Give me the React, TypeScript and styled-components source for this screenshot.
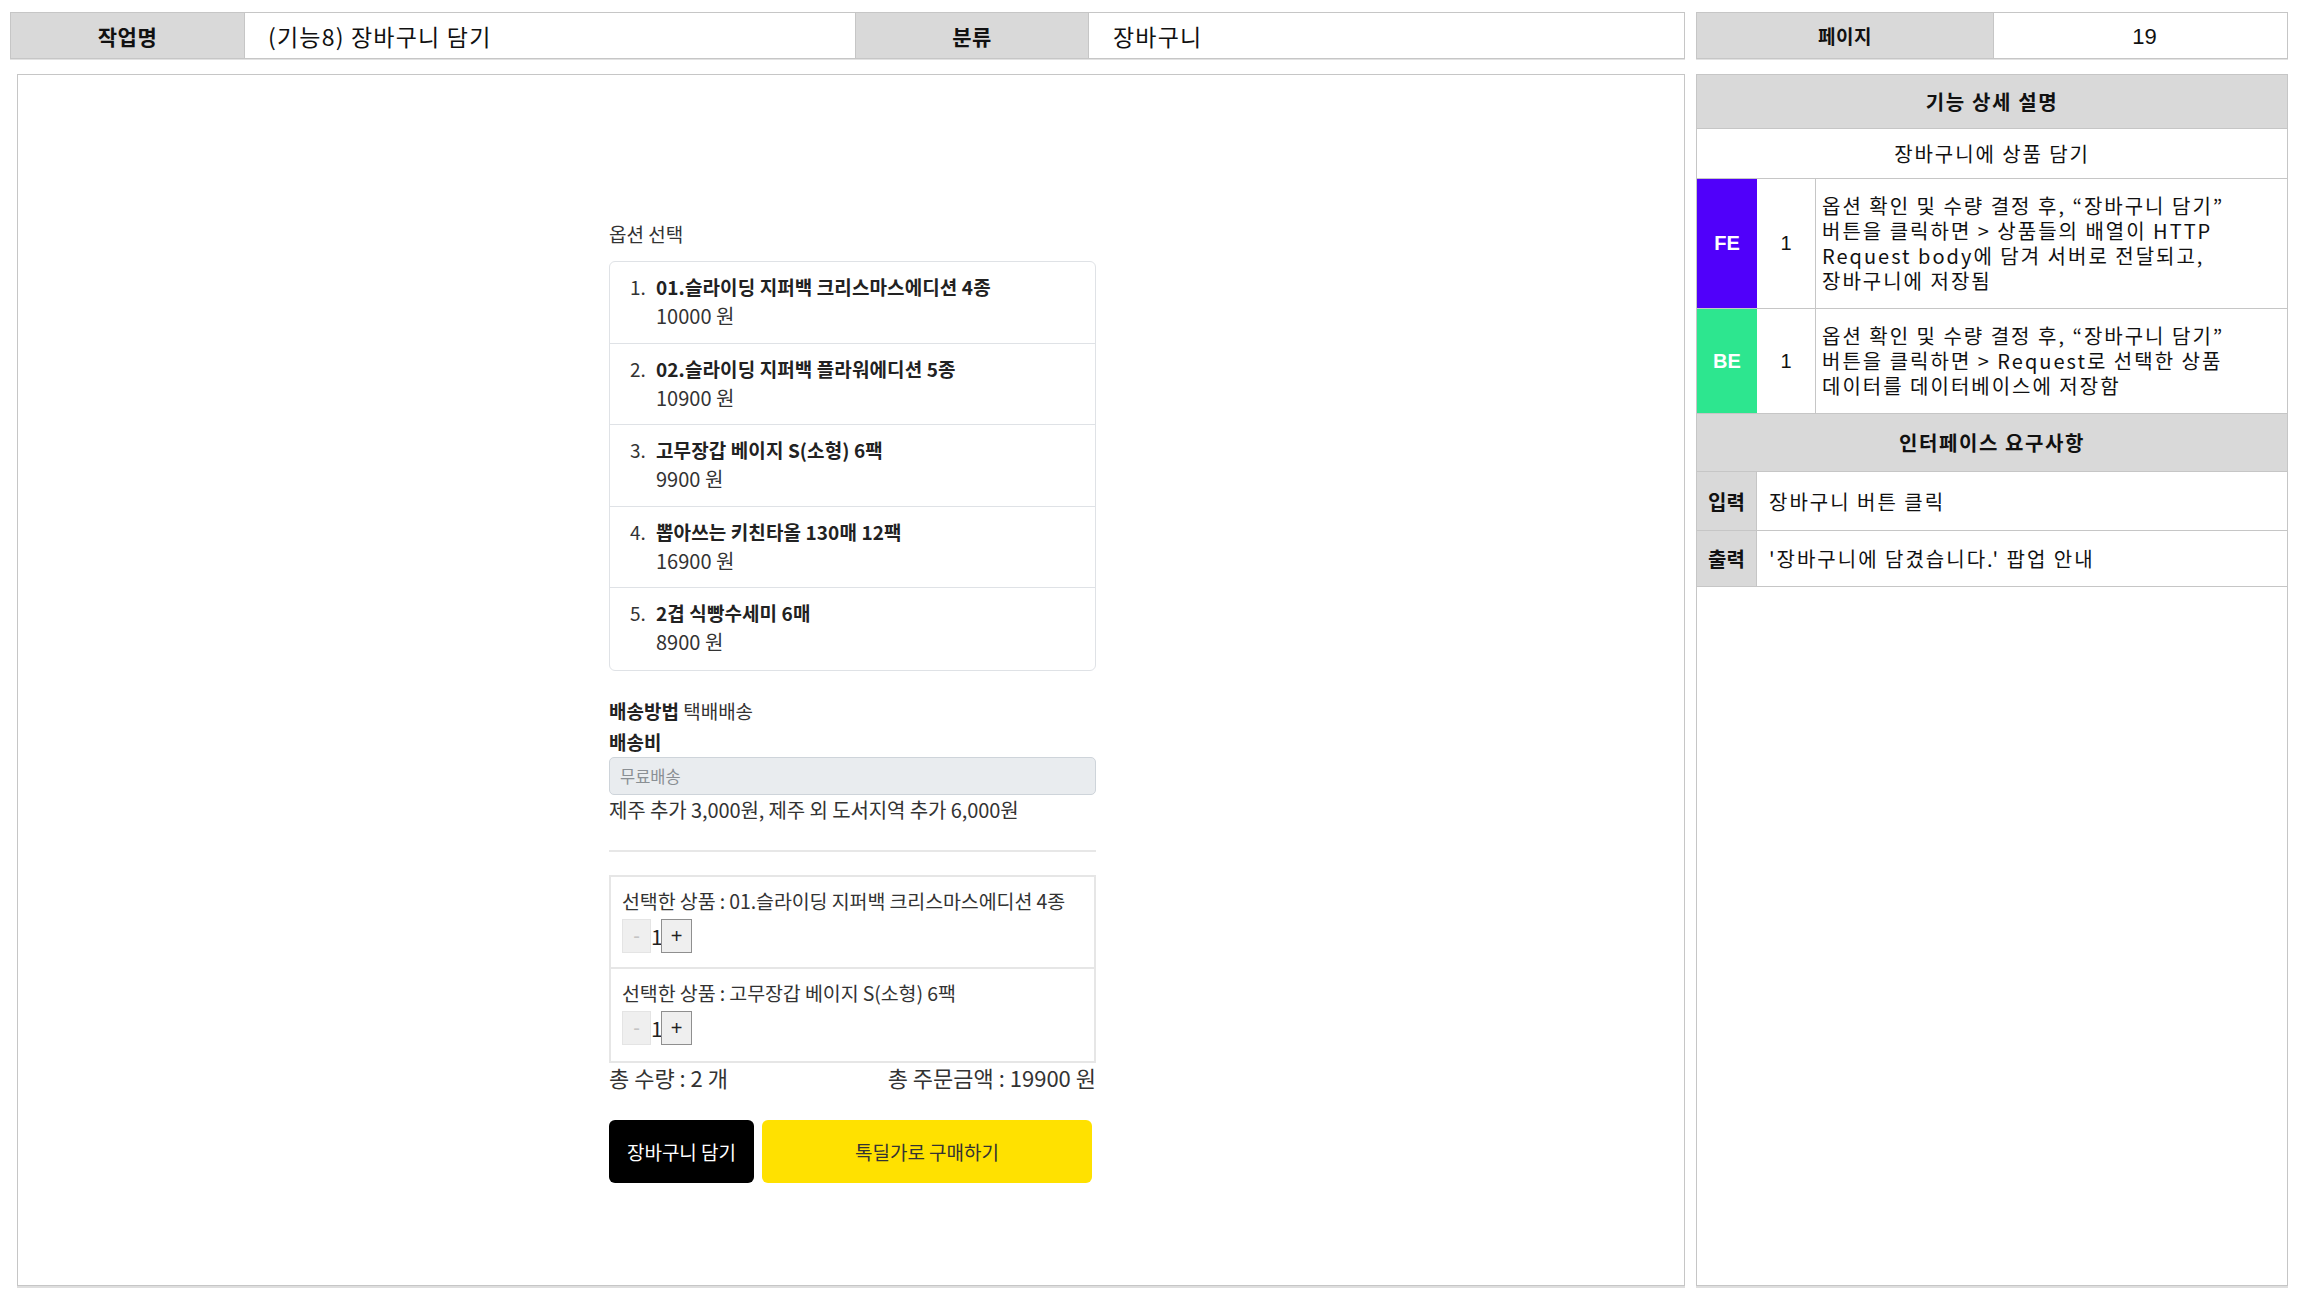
import React from 'react'
import styled, { createGlobalStyle } from 'styled-components'

const LINE = '#c6c6c6'
const HEAD_BG = '#d9d9d9'
const KR = `"Noto Sans CJK KR", "Noto Sans", sans-serif`

const GlobalStyle = createGlobalStyle`
  html, body {
    margin: 0;
    padding: 0;
    background: #ffffff;
    font-family: ${KR};
    color: #111;
  }
  * { box-sizing: border-box; }
`

const Page = styled.div`
  width: 2310px;
  height: 1300px;
  padding: 12px 0 0 10px;
  display: grid;
  grid-template-columns: 1675px 592px;
  grid-template-rows: 47px 1212px;
  column-gap: 11px;
  row-gap: 15px;
`

const HeaderBar = styled.div<{ $cols: string }>`
  display: grid;
  grid-template-columns: ${(p) => p.$cols};
  border: 1px solid ${LINE};
  box-shadow: 0 1px 0 #e2e2e2;
`

const HeadCell = styled.div<{ $align?: string; $pad?: number; $gray?: boolean; $size?: number }>`
  display: flex;
  align-items: center;
  justify-content: ${(p) => p.$align || 'center'};
  padding-left: ${(p) => p.$pad || 0}px;
  background: ${(p) => (p.$gray ? HEAD_BG : '#fff')};
  border-right: 1px solid ${LINE};
  font-size: ${(p) => p.$size || 21}px;
  font-weight: ${(p) => (p.$gray ? 700 : 400)};
  letter-spacing: ${(p) => (p.$gray ? 0.5 : 1.2)}px;
  &:last-child { border-right: none; }
`

const PageNum = styled(HeadCell)`
  font-family: "Liberation Sans", Arial, sans-serif;
  font-size: 22px;
  letter-spacing: 0;
  padding-top: 2px;
  padding-left: 8px;
`

const Canvas = styled.div`
  margin-left: 7px;
  border: 1px solid ${LINE};
  box-shadow: 0 2px 0 #dedede;
  padding: 146px 0 0 591px;
`

const Mobile = styled.div`
  width: 487px;
  display: flex;
  flex-direction: column;
  color: #222;
`

const Label = styled.div`
  font-size: 19px;
  line-height: 26px;
  color: #333;
  margin-bottom: 14px;
`

const OptionList = styled.div`
  border: 1px solid #dfe2e6;
  border-radius: 6px;
  display: flex;
  flex-direction: column;
`

const OptionRow = styled.div`
  display: flex;
  height: 81.6px;
  padding: 10px 0 0 20px;
  border-bottom: 1px solid #dfe2e6;
  &:last-child { border-bottom: none; }
`

const Marker = styled.span`
  width: 26px;
  font-size: 19px;
  line-height: 29px;
  color: #333;
`

const OptionBody = styled.div`
  display: flex;
  flex-direction: column;
`

const OptionTitle = styled.div`
  font-size: 19px;
  font-weight: 700;
  line-height: 29px;
  color: #222;
  letter-spacing: 0.1px;
`

const OptionPrice = styled.div`
  font-size: 20px;
  line-height: 29px;
  color: #333;
`

const InfoLine = styled.div<{ $top?: number }>`
  font-size: 19px;
  line-height: 31px;
  margin-top: ${(p) => p.$top || 0}px;
  color: #333;
  b { font-weight: 700; color: #222; }
`

const FeeBox = styled.div`
  height: 38px;
  border: 1px solid #ced4da;
  border-radius: 5px;
  background: #e9ecef;
  display: flex;
  align-items: center;
  padding-left: 10px;
  font-size: 16.5px;
  color: #8a8f94;
`

const Note = styled.div`
  font-size: 20px;
  line-height: 30px;
  color: #333;
  letter-spacing: -0.1px;
`

const Rule = styled.hr`
  margin: 25px 0 23px;
  border: none;
  border-top: 2px solid #e7e7e7;
`

const SelectedBox = styled.div`
  border: 2px solid #e6e6e6;
  display: flex;
  flex-direction: column;
`

const SelectedRow = styled.div`
  height: 92px;
  padding: 10px 0 0 11px;
  border-bottom: 2px solid #e6e6e6;
  &:last-child { border-bottom: none; }
`

const SelectedName = styled.div`
  font-size: 19.5px;
  line-height: 28px;
  color: #333;
  letter-spacing: -0.1px;
`

const Stepper = styled.div`
  display: flex;
  align-items: center;
  margin-top: 4px;
  height: 34px;
`

const StepButton = styled.button<{ $disabled?: boolean }>`
  width: ${(p) => (p.$disabled ? 29 : 31)}px;
  height: 34px;
  padding: 0;
  background: #efefef;
  border: 1px solid ${(p) => (p.$disabled ? '#e4e4e4' : '#8f8f8f')};
  color: ${(p) => (p.$disabled ? '#c4c4c4' : '#222')};
  font-family: "Liberation Sans", Arial, sans-serif;
  font-size: 20px;
  line-height: 1;
`

const Qty = styled.span`
  width: 10px;
  text-align: center;
  font-size: 21px;
  color: #222;
`

const Totals = styled.div`
  display: flex;
  justify-content: space-between;
  font-size: 22px;
  line-height: 28px;
  color: #333;
`

const Actions = styled.div`
  display: flex;
  gap: 8px;
  margin-top: 29px;
  height: 63px;
`

const ActionButton = styled.button<{ $kind: 'cart' | 'buy' }>`
  width: ${(p) => (p.$kind === 'cart' ? 145 : 330)}px;
  height: 63px;
  border: none;
  border-radius: 6px;
  background: ${(p) => (p.$kind === 'cart' ? '#000' : '#ffe100')};
  color: ${(p) => (p.$kind === 'cart' ? '#fff' : '#333')};
  font-family: ${KR};
  font-size: 19px;
`

const Side = styled.div`
  border: 1px solid ${LINE};
  box-shadow: 0 2px 0 #dedede;
  display: flex;
  flex-direction: column;
`

const SideHead = styled.div<{ $h: number }>`
  height: ${(p) => p.$h}px;
  background: ${HEAD_BG};
  border-bottom: 1px solid ${LINE};
  display: flex;
  align-items: center;
  justify-content: center;
  font-size: 20px;
  font-weight: 700;
  letter-spacing: 1.6px;
`

const SideSub = styled.div`
  height: 50px;
  border-bottom: 1px solid ${LINE};
  display: flex;
  align-items: center;
  justify-content: center;
  font-size: 20px;
  letter-spacing: 1.9px;
`

const DetailRow = styled.div`
  display: grid;
  grid-template-columns: 60px 59px 1fr;
  border-bottom: 1px solid ${LINE};
`

const Tag = styled.div<{ $color: string }>`
  background: ${(p) => p.$color};
  color: #fff;
  font-family: "Liberation Sans", Arial, sans-serif;
  font-weight: 700;
  font-size: 20px;
  display: flex;
  align-items: center;
  justify-content: center;
`

const Num = styled.div`
  border-right: 1px solid ${LINE};
  display: flex;
  align-items: center;
  justify-content: center;
  font-family: "Liberation Sans", Arial, sans-serif;
  font-size: 20px;
`

const DetailText = styled.div`
  padding: 14px 0 15px 6px;
  font-size: 20px;
  line-height: 25px;
  letter-spacing: 2px;
  color: #111;
`

const IoRow = styled.div<{ $h: number }>`
  height: ${(p) => p.$h}px;
  display: grid;
  grid-template-columns: 60px 1fr;
  border-bottom: 1px solid ${LINE};
`

const IoLabel = styled.div`
  background: ${HEAD_BG};
  border-right: 1px solid ${LINE};
  display: flex;
  align-items: center;
  justify-content: center;
  font-size: 20px;
  font-weight: 700;
`

const IoValue = styled.div`
  display: flex;
  align-items: center;
  padding-left: 12px;
  font-size: 20px;
  letter-spacing: 2px;
`

const options = [
  { title: '01.슬라이딩 지퍼백 크리스마스에디션 4종', price: '10000 원' },
  { title: '02.슬라이딩 지퍼백 플라워에디션 5종', price: '10900 원' },
  { title: '고무장갑 베이지 S(소형) 6팩', price: '9900 원' },
  { title: '뽑아쓰는 키친타올 130매 12팩', price: '16900 원' },
  { title: '2겹 식빵수세미 6매', price: '8900 원' },
]

const selected = ['01.슬라이딩 지퍼백 크리스마스에디션 4종', '고무장갑 베이지 S(소형) 6팩']

const details = [
  {
    tag: 'FE',
    color: '#5000fa',
    lines: [
      '옵션 확인 및 수량 결정 후, “장바구니 담기”',
      '버튼을 클릭하면 > 상품들의 배열이 HTTP',
      'Request body에 담겨 서버로 전달되고,',
      '장바구니에 저장됨',
    ],
  },
  {
    tag: 'BE',
    color: '#2de68f',
    lines: [
      '옵션 확인 및 수량 결정 후, “장바구니 담기”',
      '버튼을 클릭하면 > Request로 선택한 상품',
      '데이터를 데이터베이스에 저장함',
    ],
  },
]

export default function App() {
  return (
    <>
      <GlobalStyle />
      <Page>
        <HeaderBar $cols="234px 611px 233px 1fr">
          <HeadCell $gray>작업명</HeadCell>
          <HeadCell $align="flex-start" $pad={23} $size={23}>
            (기능8) 장바구니 담기
          </HeadCell>
          <HeadCell $gray>분류</HeadCell>
          <HeadCell $align="flex-start" $pad={24} $size={23}>
            장바구니
          </HeadCell>
        </HeaderBar>
        <HeaderBar $cols="297px 1fr">
          <HeadCell $gray $size={19}>
            페이지
          </HeadCell>
          <PageNum>19</PageNum>
        </HeaderBar>

        <Canvas>
          <Mobile>
            <Label>옵션 선택</Label>
            <OptionList>
              {options.map((o, i) => (
                <OptionRow key={o.title}>
                  <Marker>{i + 1}.</Marker>
                  <OptionBody>
                    <OptionTitle>{o.title}</OptionTitle>
                    <OptionPrice>{o.price}</OptionPrice>
                  </OptionBody>
                </OptionRow>
              ))}
            </OptionList>
            <InfoLine $top={24}>
              <b>배송방법</b> 택배배송
            </InfoLine>
            <InfoLine>
              <b>배송비</b>
            </InfoLine>
            <FeeBox>무료배송</FeeBox>
            <Note>제주 추가 3,000원, 제주 외 도서지역 추가 6,000원</Note>
            <Rule />
            <SelectedBox>
              {selected.map((name) => (
                <SelectedRow key={name}>
                  <SelectedName>선택한 상품 : {name}</SelectedName>
                  <Stepper>
                    <StepButton $disabled>-</StepButton>
                    <Qty>1</Qty>
                    <StepButton>+</StepButton>
                  </Stepper>
                </SelectedRow>
              ))}
            </SelectedBox>
            <Totals>
              <span>총 수량 : 2 개</span>
              <span>총 주문금액 : 19900 원</span>
            </Totals>
            <Actions>
              <ActionButton $kind="cart">장바구니 담기</ActionButton>
              <ActionButton $kind="buy">톡딜가로 구매하기</ActionButton>
            </Actions>
          </Mobile>
        </Canvas>

        <Side>
          <SideHead $h={54}>기능 상세 설명</SideHead>
          <SideSub>장바구니에 상품 담기</SideSub>
          {details.map((d) => (
            <DetailRow key={d.tag}>
              <Tag $color={d.color}>{d.tag}</Tag>
              <Num>1</Num>
              <DetailText>
                {d.lines.map((l) => (
                  <div key={l}>{l}</div>
                ))}
              </DetailText>
            </DetailRow>
          ))}
          <SideHead $h={58}>인터페이스 요구사항</SideHead>
          <IoRow $h={59}>
            <IoLabel>입력</IoLabel>
            <IoValue>장바구니 버튼 클릭</IoValue>
          </IoRow>
          <IoRow $h={56}>
            <IoLabel>출력</IoLabel>
            <IoValue>'장바구니에 담겼습니다.' 팝업 안내</IoValue>
          </IoRow>
        </Side>
      </Page>
    </>
  )
}
